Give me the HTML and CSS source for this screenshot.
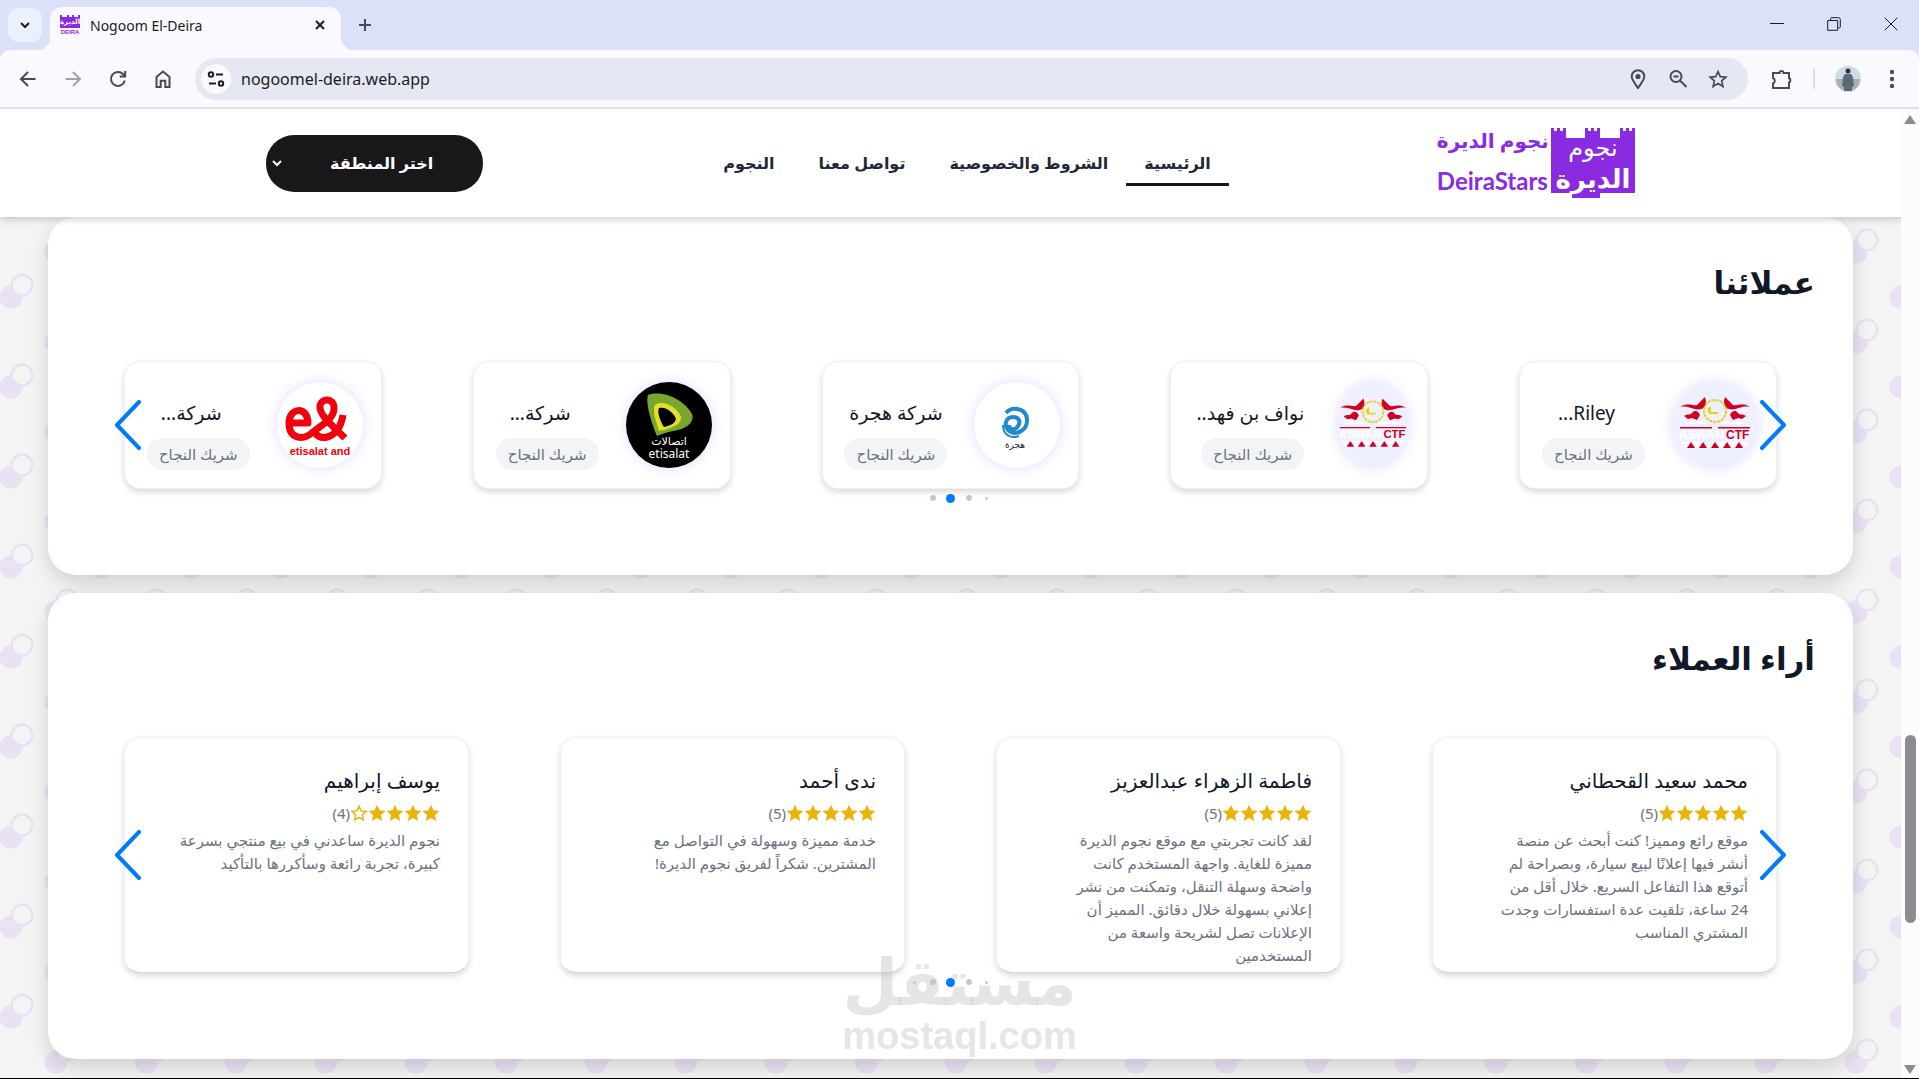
FILE: index.html
```html
<!DOCTYPE html>
<html lang="ar">
<head>
  <meta charset="UTF-8" />
  <meta name="viewport" content="width=device-width, initial-scale=1.0" />
  <title>Nogoom El-Deira</title>
  <link rel="stylesheet" href="styles.css">
</head>
<body>
  <!-- shared shapes -->
  <svg class="defs" aria-hidden="true">
    <symbol id="star" viewBox="0 0 24 24"><path d="M12 1l3.300 7.300 7.900.9-5.900 5.400 1.600 7.900L12 18.500l-6.900 4 1.600-7.900L.8 9.200l7.900-.9z"/></symbol>
    <symbol id="star-empty" viewBox="0 0 24 24"><path d="M12 3l2.700 6.200 6.800.7-5.100 4.600 1.400 6.700-5.800-3.400-5.800 3.400 1.400-6.700-5.100-4.600 6.800-.7z"/></symbol>
    <symbol id="arrow-left" viewBox="0 0 26 50"><path d="M24 2L2 25l22 23" fill="none" stroke="#007aff" stroke-width="4" stroke-linecap="round" stroke-linejoin="round"/></symbol>
    <symbol id="arrow-right" viewBox="0 0 26 50"><path d="M2 2l22 23L2 48" fill="none" stroke="#007aff" stroke-width="4" stroke-linecap="round" stroke-linejoin="round"/></symbol>
    <symbol id="castle" viewBox="0 0 84 70">
      <path fill="#8a2be2" d="M0 0h3v3h3V0h3v3h3V0h3v10h19V0h3v3h3V0h3v3h3V0h3v10h20V0h3v3h3V0h3v3h3V0h3v65H49v5H21v-5H0z"/>
    </symbol>
    <symbol id="aswan" viewBox="0 0 72 56">
      <path fill="#d00024" d="M1 10c7-5 13-1 17-2l8-8c2 6 1 11-4 12-7 2-12-4-21-2zM71 10c-7-5-13-1-17-2l-8-8c-2 6-1 11 4 12 7 2 12-4 21-2z"/>
      <path fill="#d00024" d="M5 19c4-3 6 0 8-3 3-4 7-1 8 2l-3 5-5-2-4 1zM67 19c-4-3-6 0-8-3-3-4-7-1-8 2l3 5 5-2 4 1z"/>
      <circle cx="36" cy="14" r="11" fill="none" stroke="#e3d21e" stroke-width="2" stroke-dasharray="3 1"/>
      <path fill="#e3d21e" d="M28 12l4-3v6h7v2h-9z"/>
      <path fill="#fff" d="M6 27l6-3 4 2 5-2 8 3zM40 27l8-3 5 2 5-2 7 3z"/>
      <path fill="#d00024" d="M1 30h32v1.500H1zM39 30h32v1.500H39z"/>
      <text x="0" y="42" class="aswan-text" fill="#fff">ASWAN</text>
      <text x="47" y="42" class="aswan-text" fill="#d00024">CTF</text>
      <path fill="#fff" d="M2 45h8l-4 5zM14 45h8l-4 5zM26 45h8l-4 5zM38 45h8l-4 5zM50 45h8l-4 5zM62 45h8l-4 5z"/>
      <path fill="#d00024" d="M8 51l4-6 4 6zM20 51l4-6 4 6zM32 51l4-6 4 6zM44 51l4-6 4 6zM56 51l4-6 4 6z"/>
    </symbol>
  </svg>

  <!-- browser bar -->
  <div class="tabstrip">
    <button class="tab-search" aria-label="Search tabs"><svg width="12" height="12" viewBox="0 0 12 12"><path d="M2 4l4 4 4-4"/></svg></button>
    <div class="tab">
      <svg class="favicon" width="20" height="20" viewBox="0 0 20 20">
        <path fill="#8a2be2" d="M0 0h2v2h5V0h2v2h3V0h2v2h4V0h2v13H0z"/>
        <text x="10" y="9" text-anchor="middle" class="fav-ar">الديرة</text>
        <text x="10" y="19" text-anchor="middle" class="fav-en">DEIRA</text>
      </svg>
      <span class="tab-title">Nogoom El-Deira</span>
      <button class="icon-btn tab-close" aria-label="Close tab"><svg width="12" height="12" viewBox="0 0 12 12"><path d="M2 2l8 8M10 2l-8 8"/></svg></button>
    </div>
    <button class="icon-btn new-tab" aria-label="New tab"><svg width="14" height="14" viewBox="0 0 14 14"><path d="M7 1v12M1 7h12"/></svg></button>
    <div class="window-buttons">
      <button class="icon-btn" aria-label="Minimize"><svg width="14" height="14" viewBox="0 0 14 14"><path d="M0 6.500h14"/></svg></button>
      <button class="icon-btn" aria-label="Restore"><svg width="14" height="14" viewBox="0 0 14 14"><path d="M.7 3.500h10v9.800H.7zM3.500 3V1.500Q3.500.7 5 .7h6.500q1.800 0 1.800 1.800V10q0 1-2 1"/></svg></button>
      <button class="icon-btn" aria-label="Close"><svg width="14" height="14" viewBox="0 0 14 14"><path d="M.7.7l12.600 12.600M13.300.7L.7 13.300"/></svg></button>
    </div>
  </div>
  <div class="toolbar">
    <div class="nav-icons">
      <button class="icon-btn" aria-label="Back"><svg width="20" height="20" viewBox="0 0 20 20"><path d="M17.500 10H3M10 3l-7 7 7 7"/></svg></button>
      <button class="icon-btn muted" aria-label="Forward"><svg width="20" height="20" viewBox="0 0 20 20"><path d="M2.500 10H17M10 3l7 7-7 7"/></svg></button>
      <button class="icon-btn" aria-label="Reload"><svg width="20" height="20" viewBox="0 0 20 20"><path d="M16.800 11.500A7 7 0 1 1 15 5l2 2M17.200 2v5.500h-5.500"/></svg></button>
      <button class="icon-btn" aria-label="Home"><svg width="20" height="20" viewBox="0 0 20 20"><path d="M3.500 8L10 2.500 16.500 8v10h-4.200v-6.200H7.700V18H3.500z"/></svg></button>
    </div>
    <div class="omnibox">
      <button class="icon-btn site-info" aria-label="Site information"><svg width="18" height="18" viewBox="0 0 18 18"><circle cx="4" cy="4.500" r="2.200"/><path d="M9 4.500h7M2 13.500h7"/><circle cx="14" cy="13.500" r="2.200"/></svg></button>
      <input class="url" type="text" value="nogoomel-deira.web.app" aria-label="Address">
      <button class="icon-btn" aria-label="Location"><svg width="20" height="20" viewBox="0 0 20 20"><path d="M10 19C6 13 3.700 10.500 3.700 7.500a6.300 6.300 0 0 1 12.600 0C16.300 10.500 14 13 10 19z"/><circle cx="10" cy="7.500" r="1.600" fill="#474b52"/></svg></button>
      <button class="icon-btn" aria-label="Zoom"><svg width="20" height="20" viewBox="0 0 20 20"><circle cx="8" cy="7.500" r="5.500"/><path d="M5.500 7.500h5M12 11.500l6.500 6.500"/></svg></button>
      <button class="icon-btn" aria-label="Bookmark"><svg width="20" height="20" viewBox="0 0 24 24"><path d="M12 3l2.700 6.200 6.800.6-5.100 4.500 1.500 6.700-5.900-3.500L6.100 21l1.500-6.700-5.100-4.500 6.800-.6z"/></svg></button>
    </div>
    <button class="icon-btn extensions" aria-label="Extensions"><svg width="22" height="22" viewBox="0 0 22 22"><path d="M2 5h6.500a2 2 0 0 1 4 0H18v5a2.500 2.500 0 0 1 0 4.500V20H2v-4.500a3 3 0 0 0 0-5.500z"/></svg></button>
    <span class="divider"></span>
    <svg class="profile" width="26" height="26" viewBox="0 0 26 26">
      <circle cx="13" cy="13" r="13" fill="#c9dcec"/>
      <path fill="#a9b0b0" d="M1 13h24a12 12 0 0 1-24 0z"/>
      <path fill="#5d6870" d="M10 8h6l2 3 1 9-2 1v4H9v-4l-2-1 1-9z"/>
      <circle cx="13" cy="5" r="2.500" fill="#3b2f2c"/>
    </svg>
    <button class="icon-btn menu" aria-label="Menu"><svg width="6" height="20" viewBox="0 0 6 20"><circle cx="3" cy="3" r="2.200"/><circle cx="3" cy="10" r="2.200"/><circle cx="3" cy="17" r="2.200"/></svg></button>
  </div>

  <div class="window">
    <div class="page" dir="rtl">
      <header class="header">
        <div class="header-inner">
          <a class="logo" href="#">
            <span class="castle">
              <svg width="84" height="70"><use href="#castle"/></svg>
              <span class="castle-text"><span class="castle-top">نجوم</span><span class="castle-bottom">الديرة</span></span>
            </span>
            <span class="logo-text">
              <span class="logo-ar">نجوم الديرة</span>
              <span class="logo-en">DeiraStars</span>
            </span>
          </a>
          <nav class="nav">
            <a class="active" href="#">الرئيسية</a>
            <a href="#">الشروط والخصوصية</a>
            <a href="#">تواصل معنا</a>
            <a href="#">النجوم</a>
          </nav>
          <div class="region">
            <select aria-label="اختر المنطقة"><option>اختر المنطقة</option></select>
            <svg width="12" height="12" viewBox="0 0 12 12"><path d="M2 4l4 4 4-4"/></svg>
          </div>
        </div>
      </header>

      <main class="main">
        <!-- clients -->
        <section class="panel">
          <h2>عملائنا</h2>
          <div class="slider">
            <div class="clients">
              <article class="client">
                <div class="avatar tinted"><svg width="72" height="56"><use href="#aswan"/></svg></div>
                <div class="client-info"><h3 class="cut">Riley...</h3><span class="tag">شريك النجاح</span></div>
              </article>
              <article class="client long">
                <div class="avatar tinted"><svg width="68" height="54"><use href="#aswan"/></svg></div>
                <div class="client-info"><h3>نواف بن فهد..</h3><span class="tag">شريك النجاح</span></div>
              </article>
              <article class="client">
                <div class="avatar">
                  <svg width="84" height="84" viewBox="0 0 84 84">
                    <path fill="none" stroke="#2389cf" stroke-width="4" d="M31 30c6-7 20-5 21 6 1 12-12 17-18 12-6-6-3-14 4-14 6 0 8 5 5 9-3 5-9 4-9-1"/>
                    <path fill="none" stroke="#2389cf" stroke-width="2" d="M28 42c0 10 8 14 16 11"/>
                    <text x="40" y="65" text-anchor="middle" class="hijra">هجرة</text>
                  </svg>
                </div>
                <div class="client-info"><h3>شركة هجرة</h3><span class="tag">شريك النجاح</span></div>
              </article>
              <article class="client">
                <div class="avatar dark">
                  <svg width="84" height="84" viewBox="0 0 84 84">
                    <path fill="#7aa52f" d="M21 12c17-6 38 7 44 19 3 8-5 15-19 17-6 1-11 3-16 5-5-12-12-33-9-41z"/>
                    <path fill="#e2df26" d="M28 22c8-6 23 3 26 12 1 8-12 12-22 14-3-9-7-21-4-26z"/>
                    <path fill="#000" d="M32 25c7-2 15 5 17 11-1 5-7 7-12 8-4-6-7-15-5-19z"/>
                    <text x="42" y="62" text-anchor="middle" class="etisalat-ar">اتصالات</text>
                    <text x="42" y="75" text-anchor="middle" class="etisalat-en">etisalat</text>
                  </svg>
                </div>
                <div class="client-info"><h3 class="cut">شركة...</h3><span class="tag">شريك النجاح</span></div>
              </article>
              <article class="client">
                <div class="avatar">
                  <svg width="84" height="84" viewBox="0 0 84 84">
                    <path fill="none" stroke="#f2000d" stroke-width="7" stroke-linejoin="round" d="M12 40h18c0-17-19-16-19 0 0 16 14 18 24 9 8-7 22-13 21-25-1-10-15-9-14 1 1 9 14 19 25 30"/>
                    <path fill="none" stroke="#f2000d" stroke-width="7" d="M36 46c1 13 25 13 29-14"/>
                    <text x="42" y="72" text-anchor="middle" class="eand">etisalat and</text>
                  </svg>
                </div>
                <div class="client-info"><h3 class="cut">شركة...</h3><span class="tag">شريك النجاح</span></div>
              </article>
            </div>
            <button class="slide-btn prev" aria-label="السابق"><svg width="26" height="50"><use href="#arrow-right"/></svg></button>
            <button class="slide-btn next" aria-label="التالي"><svg width="26" height="50"><use href="#arrow-left"/></svg></button>
          </div>
          <div class="dots">
            <span class="dot tiny"></span><span class="dot"></span><span class="dot current"></span><span class="dot"></span><span class="dot hidden"></span>
          </div>
        </section>

        <!-- reviews -->
        <section class="panel">
          <h2>أراء العملاء</h2>
          <div class="slider">
            <div class="reviews">
              <article class="review">
                <h3>محمد سعيد القحطاني</h3>
                <div class="rating"><svg><use href="#star"/></svg><svg><use href="#star"/></svg><svg><use href="#star"/></svg><svg><use href="#star"/></svg><svg><use href="#star"/></svg><span>(5)</span></div>
                <p>موقع رائع ومميز! كنت أبحث عن منصة<br>أنشر فيها إعلانًا لبيع سيارة، وبصراحة لم<br>أتوقع هذا التفاعل السريع. خلال أقل من<br>24 ساعة، تلقيت عدة استفسارات وجدت<br>المشتري المناسب</p>
              </article>
              <article class="review">
                <h3>فاطمة الزهراء عبدالعزيز</h3>
                <div class="rating"><svg><use href="#star"/></svg><svg><use href="#star"/></svg><svg><use href="#star"/></svg><svg><use href="#star"/></svg><svg><use href="#star"/></svg><span>(5)</span></div>
                <p>لقد كانت تجربتي مع موقع نجوم الديرة<br>مميزة للغاية. واجهة المستخدم كانت<br>واضحة وسهلة التنقل، وتمكنت من نشر<br>إعلاني بسهولة خلال دقائق. المميز أن<br>الإعلانات تصل لشريحة واسعة من<br>المستخدمين</p>
              </article>
              <article class="review">
                <h3>ندى أحمد</h3>
                <div class="rating"><svg><use href="#star"/></svg><svg><use href="#star"/></svg><svg><use href="#star"/></svg><svg><use href="#star"/></svg><svg><use href="#star"/></svg><span>(5)</span></div>
                <p>خدمة مميزة وسهولة في التواصل مع<br>المشترين. شكراً لفريق نجوم الديرة!</p>
              </article>
              <article class="review">
                <h3>يوسف إبراهيم</h3>
                <div class="rating"><svg><use href="#star"/></svg><svg><use href="#star"/></svg><svg><use href="#star"/></svg><svg><use href="#star"/></svg><svg class="empty"><use href="#star-empty"/></svg><span>(4)</span></div>
                <p>نجوم الديرة ساعدني في بيع منتجي بسرعة<br>كبيرة، تجربة رائعة وسأكررها بالتأكيد</p>
              </article>
            </div>
            <button class="slide-btn prev" aria-label="السابق"><svg width="26" height="50"><use href="#arrow-right"/></svg></button>
            <button class="slide-btn next" aria-label="التالي"><svg width="26" height="50"><use href="#arrow-left"/></svg></button>
          </div>
          <div class="dots">
            <span class="dot tiny"></span><span class="dot"></span><span class="dot current"></span><span class="dot"></span><span class="dot tiny"></span>
          </div>
        </section>
      </main>
    </div>

    <div class="scrollbar" aria-hidden="true">
      <svg width="12" height="10" viewBox="0 0 12 10"><path d="M6 0l6 9H0z"/></svg>
      <span class="track"><span class="thumb"></span></span>
      <svg width="12" height="10" viewBox="0 0 12 10"><path d="M6 10L0 1h12z"/></svg>
    </div>

    <div class="watermark"><span class="mark-ar">مستقل</span><span class="mark-en">mostaql.com</span></div>
  </div>
</body>
</html>
```

FILE: styles.css
```css
* {
  margin: 0;
  padding: 0;
  box-sizing: border-box;
}
body {
  display: flex;
  flex-direction: column;
  height: 100vh;
  overflow: hidden;
  background-color: #dae1f9;
  border-bottom: 1px solid #000000;
  font-family: "Noto Sans", "DejaVu Sans", sans-serif;
}
button {
  border: none;
  background: none;
  cursor: pointer;
}
a {
  text-decoration: none;
}
.defs {
  position: absolute;
  width: 0;
  height: 0;
}

/* browser bar */
.tabstrip {
  display: flex;
  align-items: flex-end;
  height: 50px;
  padding-left: 8px;
  flex-shrink: 0;
}
.tab-search {
  display: flex;
  align-items: center;
  justify-content: center;
  width: 34px;
  height: 34px;
  margin: 0 8px 8px 0;
  border-radius: 10px;
  background-color: #ebf0fd;
}
.tab-search svg,
.icon-btn svg {
  fill: none;
  stroke: #474b52;
  stroke-width: 2;
}
.tab-search svg,
.tab-close svg {
  stroke: #1c1d20;
}
.icon-btn {
  display: flex;
  align-items: center;
  justify-content: center;
  flex-shrink: 0;
}
.icon-btn.muted svg {
  stroke: #a2a4ab;
}
.tab {
  position: relative;
  display: flex;
  align-items: center;
  width: 291px;
  height: 43px;
  padding: 0 15px 7px 10px;
  border-radius: 12px 12px 0 0;
  background-color: #faf9ff;
}
.tab::before,
.tab::after {
  content: "";
  position: absolute;
  bottom: 0;
  width: 12px;
  height: 12px;
}
.tab::before {
  left: -12px;
  background: radial-gradient(circle at 0 0, transparent 12px, #faf9ff 12px);
}
.tab::after {
  right: -12px;
  background: radial-gradient(circle at 100% 0, transparent 12px, #faf9ff 12px);
}
.favicon {
  overflow: visible;
}
.fav-ar {
  font: bold 7px "DejaVu Sans", sans-serif;
  fill: #ffffff;
}
.fav-en {
  font: bold 6px "Liberation Sans", sans-serif;
  fill: #8a2be2;
}
.tab-title {
  flex: 1;
  margin-left: 10px;
  font-size: 14px;
  color: #1c1d20;
}
.new-tab {
  margin: 0 auto 18px 17px;
}
.window-buttons {
  display: flex;
  gap: 43px;
  margin: 0 21px 19px 0;
}
.window-buttons svg {
  stroke: #1c1d20;
  stroke-width: 1;
}
.toolbar {
  display: flex;
  align-items: center;
  height: 59px;
  padding: 0 24px 0 18px;
  flex-shrink: 0;
  border-bottom: 2px solid #e0e0ec;
  border-radius: 10px 10px 0 0;
  background-color: #faf9ff;
}
.nav-icons {
  display: flex;
  gap: 25px;
  margin-right: 22px;
}
.omnibox {
  display: flex;
  flex: 1;
  align-items: center;
  gap: 20px;
  height: 42px;
  padding: 0 20px 0 6px;
  border-radius: 21px;
  background-color: #e5e7f2;
}
.site-info {
  width: 30px;
  height: 30px;
  border-radius: 50%;
  background-color: #faf9ff;
}
.site-info svg {
  stroke: #1c1d20;
}
.url {
  flex: 1;
  margin-left: -10px;
  border: none;
  outline: none;
  background: none;
  font-family: inherit;
  font-size: 16px;
  color: #1c1d20;
}
.extensions {
  margin-left: 23px;
}
.divider {
  width: 2px;
  height: 20px;
  margin: 0 20px;
  background-color: #d3e0fb;
}
.menu {
  margin-left: 28px;
}
.menu svg {
  fill: #474b52;
  stroke: none;
}

/* window */
.window {
  position: relative;
  display: flex;
  flex: 1;
  min-height: 0;
}
.page {
  flex: 1;
  overflow: hidden;
  background-color: #ffffff;
}
.scrollbar {
  display: flex;
  flex-direction: column;
  align-items: center;
  width: 18px;
  padding: 6px 0 4px;
  background-color: #fcfcfc;
  fill: #8b8c91;
}
.track {
  display: flex;
  flex: 1;
  flex-direction: column;
  align-items: center;
}
.track::before {
  content: "";
  flex: 13;
}
.track::after {
  content: "";
  flex: 3;
}
.thumb {
  width: 11px;
  height: 20%;
  border-radius: 6px;
  background-color: #8b8c91;
}

/* header */
.header {
  position: relative;
  z-index: 2;
  background-color: #ffffff;
  box-shadow: 0 2px 8px rgba(0, 0, 0, 0.2);
}
.header-inner {
  display: flex;
  align-items: center;
  justify-content: space-between;
  width: 72%;
  height: 108px;
  margin: 0 auto;
}
.logo {
  display: flex;
  gap: 2px;
  color: #8a2be2;
}
.castle {
  position: relative;
  display: flex;
}
.castle-text {
  position: absolute;
  inset: 5px 0 0;
  display: flex;
  flex-direction: column;
  align-items: center;
  color: #ffffff;
}
.castle-top {
  font-size: 24px;
  line-height: 28px;
}
.castle-bottom {
  font-size: 26px;
  font-weight: bold;
  line-height: 34px;
}
.logo-text {
  display: flex;
  flex-direction: column;
  width: 112px;
  white-space: nowrap;
}
.logo-ar {
  font-size: 20px;
  font-weight: bold;
  line-height: 26px;
}
.logo-en {
  margin-top: 12px;
  font-family: Lato, sans-serif;
  font-size: 24px;
  font-weight: bold;
  line-height: 30px;
  direction: ltr;
}
.nav {
  display: flex;
  gap: 8px;
  margin-left: 14px;
}
.nav a {
  padding: 4px 18px 2px;
  border-bottom: 3px solid transparent;
  font-size: 16px;
  font-weight: bold;
  line-height: 36px;
  color: #1f293b;
}
.nav a.active {
  margin-left: -8px;
  border-color: #18181b;
}
.region {
  position: relative;
  width: 217px;
}
.region select {
  width: 100%;
  height: 57px;
  padding: 0 0 0 14px;
  border: none;
  border-radius: 28px;
  appearance: none;
  background-color: #18181b;
  color: #ffffff;
  font-family: inherit;
  font-size: 16px;
  font-weight: bold;
  text-align: center;
  text-align-last: center;
}
.region svg {
  position: absolute;
  top: 22px;
  left: 5px;
  fill: none;
  stroke: #ffffff;
  stroke-width: 2;
}

/* content */
.main {
  display: flex;
  flex-direction: column;
  gap: 18px;
  padding: 0 48px 40px;
  background-color: #f4f4f4;
  background-image:
    radial-gradient(circle, #f4f4f4 9px, #eae2f4 9px, #eae2f4 11px, transparent 12px),
    radial-gradient(circle, #f4f4f4 9px, #eae2f4 9px, #eae2f4 11px, transparent 12px),
    radial-gradient(circle, #eae2f4 11px, transparent 12px),
    radial-gradient(circle, #eae2f4 11px, transparent 12px);
  background-size: 90px 90px;
  background-position: -23px 23px, 22px -22px, -34px 35px, 11px -10px;
}
.panel {
  padding: 35px 38px 71px;
  border-radius: 28px;
  background-color: #ffffff;
  box-shadow: 0 8px 20px rgba(0, 0, 0, 0.15);
}
.panel h2 {
  margin-bottom: 49px;
  font-size: 31px;
  line-height: 60px;
  color: #111827;
}
.slider {
  position: relative;
  margin: 0 38px;
}
.slide-btn {
  position: absolute;
  top: 50%;
  display: flex;
  transform: translateY(-50%);
}
.slide-btn.prev {
  right: -9px;
}
.slide-btn.next {
  left: -9px;
}
.clients,
.reviews {
  display: grid;
  grid-template-columns: repeat(5, 1fr);
  gap: 91px;
}
.reviews {
  grid-template-columns: repeat(4, 1fr);
}
.client,
.review {
  min-width: 0;
  border: 1px solid #f1f1f3;
  border-radius: 16px;
  background-color: #ffffff;
  box-shadow: 0 3px 6px rgba(0, 0, 0, 0.15);
}
.client {
  display: flex;
  align-items: center;
  gap: 27px;
  height: 128px;
  padding: 0 18px;
}
.client.long {
  gap: 33px;
}
.avatar {
  display: flex;
  align-items: center;
  justify-content: center;
  flex-shrink: 0;
  width: 86px;
  height: 86px;
  overflow: hidden;
  border-radius: 50%;
  background-color: #ffffff;
  box-shadow: 0 0 14px rgba(100, 90, 255, 0.2);
}
.long .avatar {
  width: 72px;
}
.avatar.tinted {
  background-color: #eff0fd;
}
.avatar.dark {
  background-color: #000000;
}
.aswan-text {
  direction: ltr;
  font: bold 12px "Liberation Sans", sans-serif;
}
.hijra {
  font: 9px "DejaVu Sans", sans-serif;
  fill: #222222;
}
.etisalat-ar {
  font: 11px "DejaVu Sans", sans-serif;
  fill: #ffffff;
}
.etisalat-en {
  font: 12px "Noto Sans", sans-serif;
  fill: #ffffff;
}
.eand {
  font: bold 11px "Liberation Sans", sans-serif;
  fill: #f2000d;
}
.client-info {
  display: flex;
  flex-direction: column;
  align-items: center;
  gap: 10px;
  padding-top: 18px;
  white-space: nowrap;
}
.long .client-info {
  align-items: flex-start;
}
.client h3,
.review h3 {
  font-size: 20px;
  font-weight: normal;
  line-height: 30px;
  color: #111827;
}
.client h3 {
  font-size: 19px;
}
.client h3.cut {
  padding-right: 14px;
}
.tag {
  width: 103px;
  border-radius: 16px;
  background-color: #f3f4f8;
  font-size: 15px;
  line-height: 32px;
  text-align: center;
  color: #6b7280;
}
.review {
  height: 236px;
  padding: 28px;
  border-bottom-color: #d4d5d9;
}
.rating {
  display: flex;
  align-items: center;
  height: 18px;
  margin: 8px 0 7px;
  font-size: 15px;
  color: #6b7280;
}
.rating svg {
  width: 18px;
  height: 18px;
  fill: #eab308;
}
.rating svg.empty {
  fill: #ffffff;
  stroke: #eab308;
  stroke-width: 2;
}
.review p {
  font-size: 15px;
  line-height: 23px;
  white-space: nowrap;
  color: #6b7280;
}
.dots {
  display: flex;
  justify-content: center;
  gap: 8px;
  margin-top: 3px;
}
.dot {
  display: flex;
  align-items: center;
  justify-content: center;
  width: 10px;
  height: 12px;
}
.dot::before {
  content: "";
  width: 6px;
  height: 6px;
  border-radius: 50%;
  background-color: #c8c8cc;
}
.dot.tiny::before {
  width: 3px;
  height: 3px;
}
.dot.current::before {
  width: 9px;
  height: 9px;
  background-color: #007aff;
}
.dot.hidden {
  visibility: hidden;
}

/* watermark over the page */
.watermark {
  position: absolute;
  bottom: 20px;
  left: 50%;
  display: flex;
  flex-direction: column;
  align-items: center;
  transform: translateX(-50%);
  font-weight: bold;
  color: rgba(190, 190, 190, 0.4);
  pointer-events: none;
}
.mark-ar {
  font-size: 64px;
  line-height: 66px;
}
.mark-en {
  font-family: "Liberation Sans", sans-serif;
  font-size: 38px;
  line-height: 44px;
}
```
